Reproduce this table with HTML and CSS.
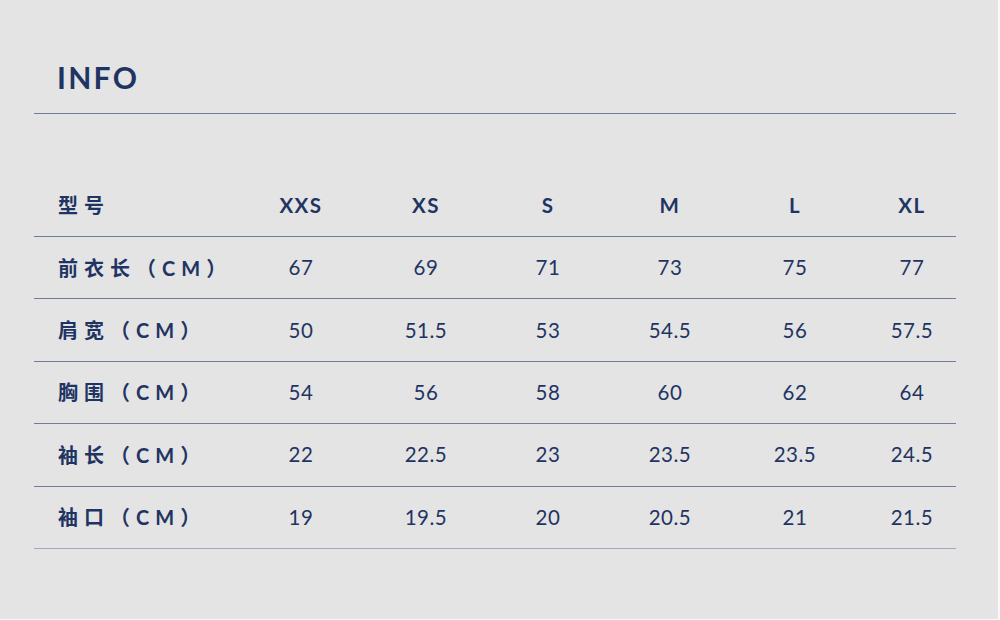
FILE: index.html
```html
<!DOCTYPE html>
<html lang="zh">
<head>
<meta charset="utf-8">
<title>INFO</title>
<link rel="stylesheet" href="styles.css">
</head>
<body>
<div class="page">
  <header class="head"><h1 class="title">INFO</h1></header>
  <div class="table">
    <div class="row row-head">
      <div class="cell label">型号</div>
      <div class="cell">XXS</div><div class="cell">XS</div><div class="cell">S</div><div class="cell">M</div><div class="cell">L</div><div class="cell last">XL</div>
    </div>
    <div class="row">
      <div class="cell label">前衣长（CM）</div>
      <div class="cell">67</div><div class="cell">69</div><div class="cell">71</div><div class="cell">73</div><div class="cell">75</div><div class="cell last">77</div>
    </div>
    <div class="row">
      <div class="cell label">肩宽（CM）</div>
      <div class="cell">50</div><div class="cell">51.5</div><div class="cell">53</div><div class="cell">54.5</div><div class="cell">56</div><div class="cell last">57.5</div>
    </div>
    <div class="row">
      <div class="cell label">胸围（CM）</div>
      <div class="cell">54</div><div class="cell">56</div><div class="cell">58</div><div class="cell">60</div><div class="cell">62</div><div class="cell last">64</div>
    </div>
    <div class="row">
      <div class="cell label">袖长（CM）</div>
      <div class="cell">22</div><div class="cell">22.5</div><div class="cell">23</div><div class="cell">23.5</div><div class="cell">23.5</div><div class="cell last">24.5</div>
    </div>
    <div class="row row-end">
      <div class="cell label">袖口（CM）</div>
      <div class="cell">19</div><div class="cell">19.5</div><div class="cell">20</div><div class="cell">20.5</div><div class="cell">21</div><div class="cell last">21.5</div>
    </div>
  </div>
</div>
</body>
</html>
```
FILE: styles.css
```css
html, body {
  margin: 0;
  padding: 0;
  background: #fafafa;
}
.page {
  width: 998px;
  height: 619px;
  background: #e4e4e4;
  padding: 0 42px 0 34px;
  box-sizing: border-box;
  color: #1f3463;
  font-family: Lato, "Noto Sans CJK SC", sans-serif;
}
.head {
  height: 114px;
  border-bottom: 1px solid #6f7d99;
  display: flex;
  align-items: flex-end;
  padding-left: 23px;
  box-sizing: border-box;
}
.title {
  margin: 0 0 21px 0;
  font-size: 30px;
  line-height: 1;
  font-weight: 700;
  letter-spacing: 2.3px;
}
.table {
  margin-top: 60px;
}
.row {
  display: grid;
  grid-template-columns: 206px 122px 128px 116px 128px 122px 1fr;
  height: 62.4px;
  align-items: center;
  border-bottom: 1px solid #6f7d99;
  box-sizing: border-box;
  font-size: 20.5px;
  letter-spacing: 0.5px;
  padding-bottom: 1px;
}
.row-head {
  height: 63px;
}
.row-end {
  border-bottom-color: #9ea8bf;
}
.cell {
  text-align: center;
}
.cell.last {
  padding-left: 12px;
}
.label {
  text-align: left;
  padding-left: 24px;
  font-family: Lato, "Noto Sans CJK SC", sans-serif;
  font-weight: 700;
  font-size: 20px;
  letter-spacing: 6px;
}
.row-head .cell {
  font-weight: 700;
  letter-spacing: 1.5px;
}
.row-head .label {
  font-weight: 700;
  letter-spacing: 6px;
}
```
